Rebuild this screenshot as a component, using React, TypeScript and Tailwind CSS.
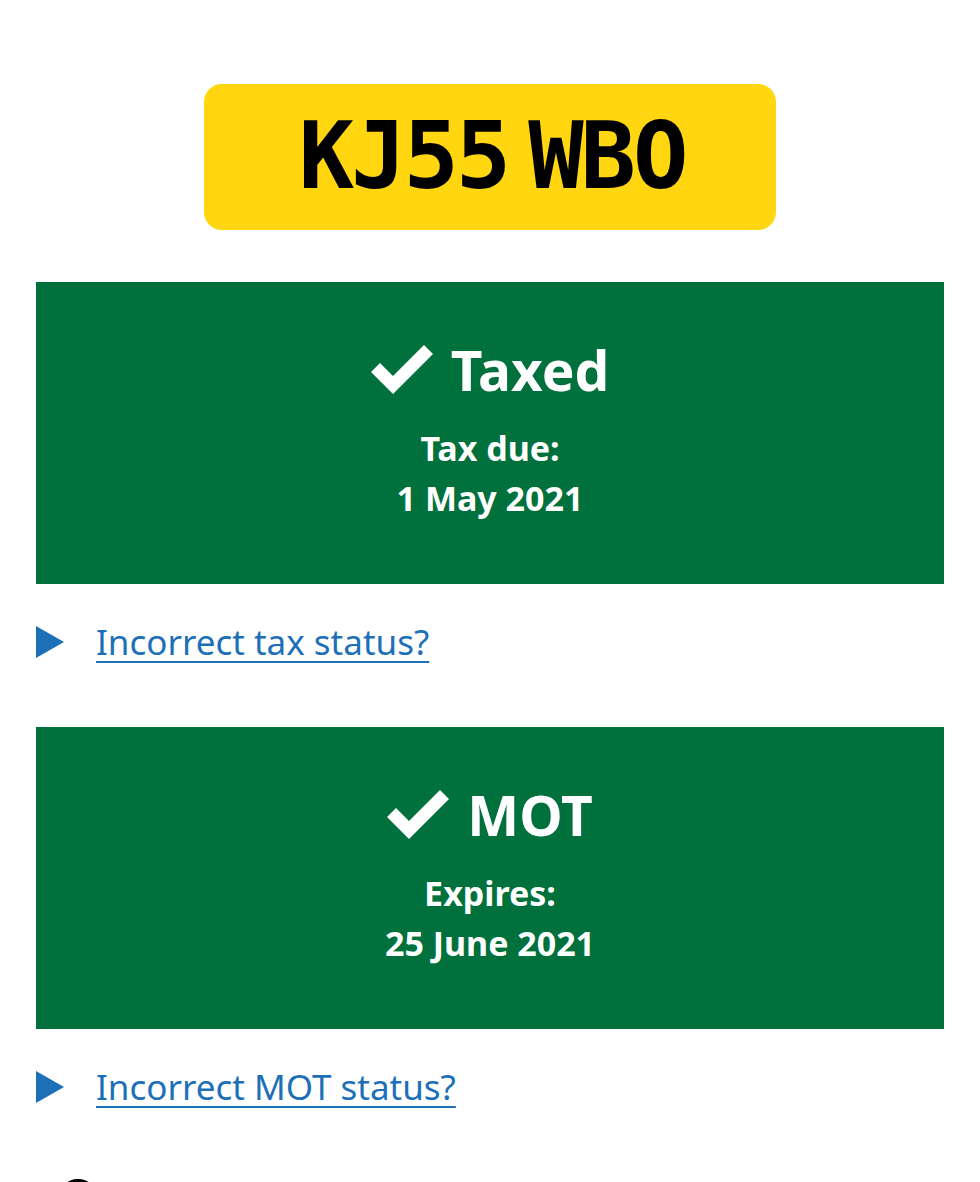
import { ReactNode } from "react";

function Tick() {
  return (
    <svg width="62" height="50" viewBox="0 0 62 50" className="shrink-0">
      <polygon points="0,27 9,18 22,31 53,0 62,9 22,49" fill="#ffffff" />
    </svg>
  );
}

function StatusPanel({ title, label, date }: { title: string; label: string; date: string }) {
  return (
    <div className="bg-[#00703c] h-[302px] flex flex-col items-center pt-[58px] text-white">
      <div className="flex items-center gap-[18px]">
        <Tick />
        <span className="text-[55px] leading-[60px] font-bold">{title}</span>
      </div>
      <p className="mt-[23px] text-[34px] leading-[50px] font-bold">{label}</p>
      <p className="text-[34px] leading-[50px] font-bold">{date}</p>
    </div>
  );
}

function StatusLink({ children }: { children: ReactNode }) {
  return (
    <div className="flex items-center gap-[32px] h-[40px]">
      <svg width="28" height="32" viewBox="0 0 28 32" className="shrink-0">
        <polygon points="0,0 28,16 0,32" fill="#1d70b8" />
      </svg>
      <a href="#" className="text-[#1d70b8] text-[35px] leading-[40px] underline underline-offset-[6px] decoration-2">
        {children}
      </a>
    </div>
  );
}

export default function App() {
  return (
    <div className="bg-white min-h-screen overflow-hidden px-[36px] pt-[84px]" style={{ fontFamily: "'Noto Sans', 'Open Sans', sans-serif" }}>
      {/* Number plate */}
      <div className="mx-auto w-[572px] h-[146px] rounded-[18px] bg-[#ffd60f] flex items-center justify-center">
        <div
          className="flex gap-[20px] text-black font-bold text-[92px] leading-none tracking-[-3px] pl-[4px]"
          style={{ fontFamily: "'DejaVu Sans Mono', monospace" }}
        >
          <span>KJ55</span>
          <span>WBO</span>
        </div>
      </div>

      <div className="mt-[52px]">
        <StatusPanel title="Taxed" label="Tax due:" date="1 May 2021" />
      </div>
      <div className="mt-[38px]">
        <StatusLink>Incorrect tax status?</StatusLink>
      </div>

      <div className="mt-[65px]">
        <StatusPanel title="MOT" label="Expires:" date="25 June 2021" />
      </div>
      <div className="mt-[38px]">
        <StatusLink>Incorrect MOT status?</StatusLink>
      </div>

      <div className="mt-[72px] ml-[22px] w-[40px] h-[40px] rounded-full border-[3px] border-black" />
    </div>
  );
}
